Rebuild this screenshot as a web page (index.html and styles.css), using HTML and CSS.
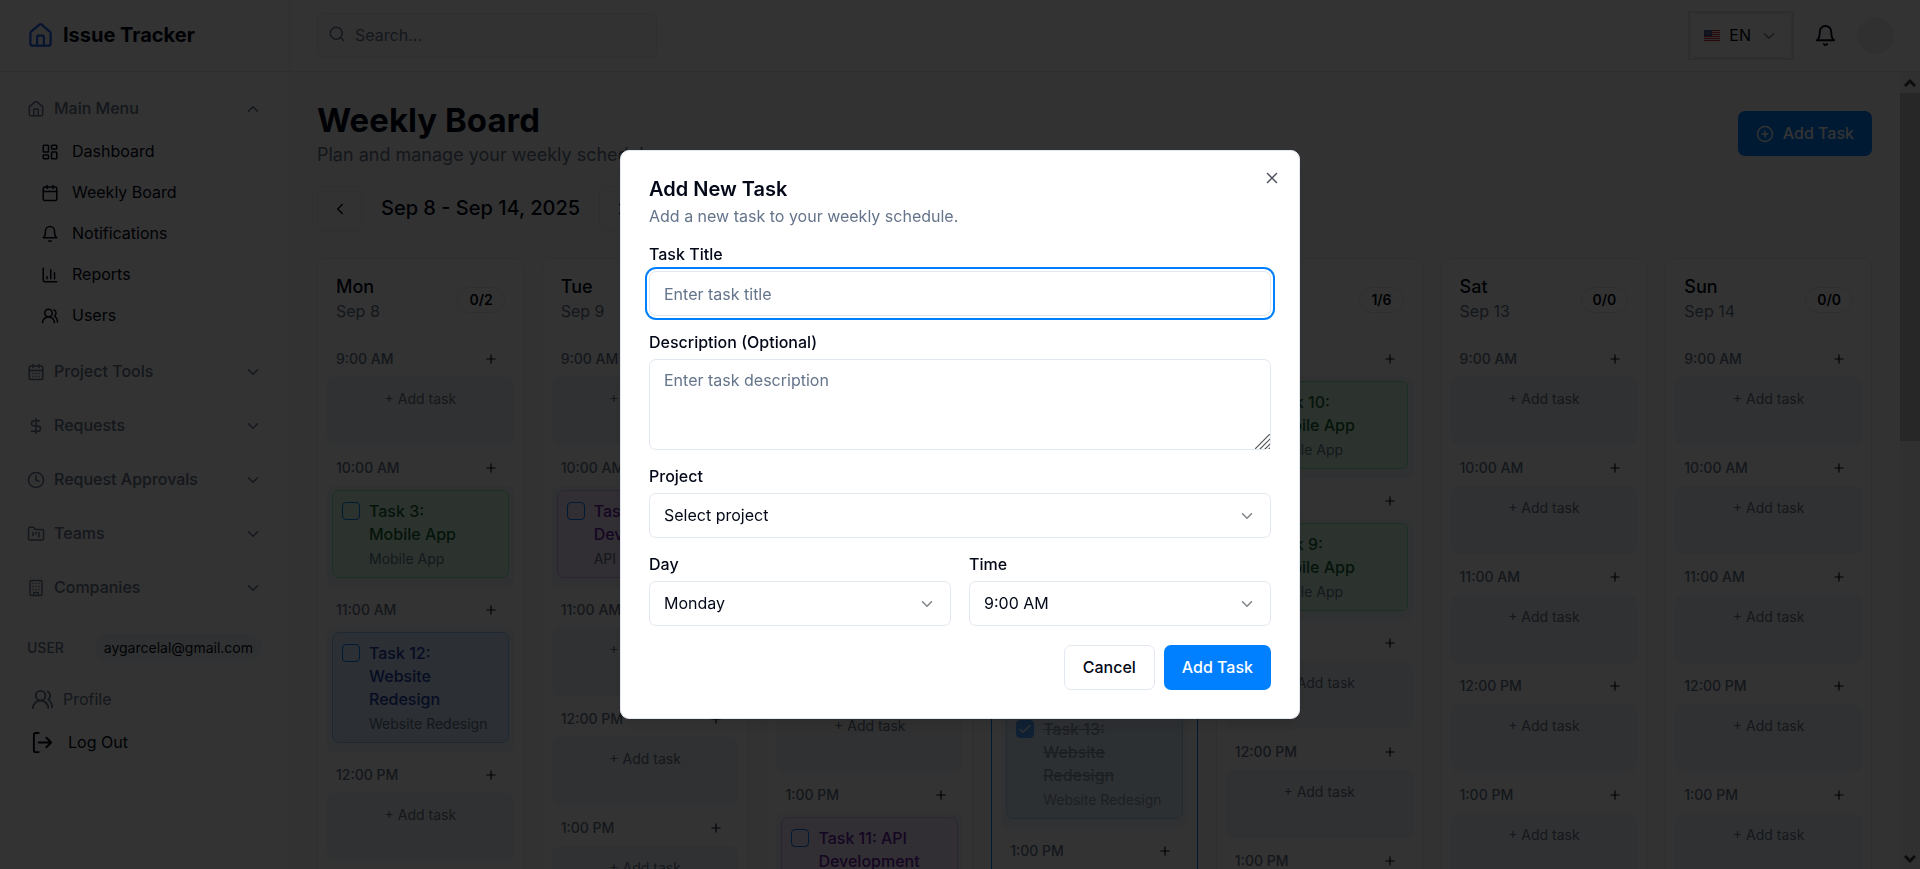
FILE: index.html
```html
<!DOCTYPE html>
<html lang="en">
<head>
<meta charset="utf-8">
<title>Issue Tracker</title>
<link rel="stylesheet" href="styles.css">
</head>
<body>
<svg class="sprite" aria-hidden="true">
  <symbol id="house" viewBox="0 0 24 24"><path d="M3 10a2 2 0 0 1 .7-1.5l7-6a2 2 0 0 1 2.6 0l7 6A2 2 0 0 1 21 10v9a2 2 0 0 1-2 2H5a2 2 0 0 1-2-2z"/><path d="M15 21v-8a1 1 0 0 0-1-1h-4a1 1 0 0 0-1 1v8"/></symbol>
  <symbol id="up" viewBox="0 0 24 24"><path d="m18 15-6-6-6 6"/></symbol>
  <symbol id="down" viewBox="0 0 24 24"><path d="m6 9 6 6 6-6"/></symbol>
  <symbol id="left" viewBox="0 0 24 24"><path d="m15 18-6-6 6-6"/></symbol>
  <symbol id="right" viewBox="0 0 24 24"><path d="m9 18 6-6-6-6"/></symbol>
  <symbol id="dash" viewBox="0 0 24 24"><rect width="7" height="9" x="3" y="3" rx="1"/><rect width="7" height="5" x="14" y="3" rx="1"/><rect width="7" height="9" x="14" y="12" rx="1"/><rect width="7" height="5" x="3" y="16" rx="1"/></symbol>
  <symbol id="cal" viewBox="0 0 24 24"><path d="M8 2v4M16 2v4M3 10h18"/><rect width="18" height="18" x="3" y="4" rx="2"/></symbol>
  <symbol id="caldays" viewBox="0 0 24 24"><path d="M8 2v4M16 2v4M3 10h18M8 14h.01M12 14h.01M16 14h.01M8 18h.01M12 18h.01M16 18h.01"/><rect width="18" height="18" x="3" y="4" rx="2"/></symbol>
  <symbol id="bell" viewBox="0 0 24 24"><path d="M6 8a6 6 0 0 1 12 0c0 7 3 9 3 9H3s3-2 3-9"/><path d="M10.3 21a1.94 1.94 0 0 0 3.4 0"/></symbol>
  <symbol id="chart" viewBox="0 0 24 24"><path d="M3 3v16a2 2 0 0 0 2 2h16M18 17V9M13 17V5M8 17v-3"/></symbol>
  <symbol id="users" viewBox="0 0 24 24"><path d="M18 21a8 8 0 0 0-16 0"/><circle cx="10" cy="8" r="5"/><path d="M22 20c0-3.37-2-6.5-4-8a5 5 0 0 0-.45-8.3"/></symbol>
  <symbol id="dollar" viewBox="0 0 24 24"><path d="M12 2v20M17 5H9.500a3.500 3.500 0 0 0 0 7h5a3.500 3.500 0 0 1 0 7H6"/></symbol>
  <symbol id="clock" viewBox="0 0 24 24"><circle cx="12" cy="12" r="10"/><path d="M12 6v6l4 2"/></symbol>
  <symbol id="folder" viewBox="0 0 24 24"><path d="M4 20h16a2 2 0 0 0 2-2V8a2 2 0 0 0-2-2h-7.930a2 2 0 0 1-1.660-.9l-.82-1.200A2 2 0 0 0 7.930 3H4a2 2 0 0 0-2 2v13c0 1.100.9 2 2 2Z"/><path d="M8 10v4M12 10v2M16 10v6"/></symbol>
  <symbol id="building" viewBox="0 0 24 24"><rect width="16" height="20" x="4" y="2" rx="2"/><path d="M9 22v-4h6v4M8 6h.01M16 6h.01M12 6h.01M12 10h.01M12 14h.01M16 10h.01M16 14h.01M8 10h.01M8 14h.01"/></symbol>
  <symbol id="logout" viewBox="0 0 24 24"><path d="M8 2H5a2 2 0 0 0-2 2v16a2 2 0 0 0 2 2h3M16 17l5-5-5-5M21 12H8"/></symbol>
  <symbol id="search" viewBox="0 0 24 24"><circle cx="11" cy="11" r="8"/><path d="m21 21-4.300-4.300"/></symbol>
  <symbol id="pluscircle" viewBox="0 0 24 24"><circle cx="12" cy="12" r="10"/><path d="M8 12h8M12 8v8"/></symbol>
  <symbol id="plus" viewBox="0 0 24 24"><path d="M5 12h14M12 5v14"/></symbol>
  <symbol id="x" viewBox="0 0 24 24"><path d="M18 6 6 18M6 6l12 12"/></symbol>
</svg>

<div class="app">
  <aside class="sidebar">
    <div class="brand"><svg class="icon icon-logo"><use href="#house"/></svg><span>Issue Tracker</span></div>
    <nav class="menu">
      <section>
        <button class="group"><svg class="icon"><use href="#house"/></svg><span>Main Menu</span><svg class="icon"><use href="#up"/></svg></button>
        <div class="links">
          <a href="#dashboard"><svg class="icon"><use href="#dash"/></svg>Dashboard</a>
          <a href="#weekly"><svg class="icon"><use href="#cal"/></svg>Weekly Board</a>
          <a href="#notifications"><svg class="icon"><use href="#bell"/></svg>Notifications</a>
          <a href="#reports"><svg class="icon"><use href="#chart"/></svg>Reports</a>
          <a href="#users-page"><svg class="icon"><use href="#users"/></svg>Users</a>
        </div>
      </section>
      <button class="group"><svg class="icon"><use href="#caldays"/></svg><span>Project Tools</span><svg class="icon"><use href="#down"/></svg></button>
      <button class="group"><svg class="icon"><use href="#dollar"/></svg><span>Requests</span><svg class="icon"><use href="#down"/></svg></button>
      <button class="group"><svg class="icon"><use href="#clock"/></svg><span>Request Approvals</span><svg class="icon"><use href="#down"/></svg></button>
      <button class="group"><svg class="icon"><use href="#folder"/></svg><span>Teams</span><svg class="icon"><use href="#down"/></svg></button>
      <button class="group"><svg class="icon"><use href="#building"/></svg><span>Companies</span><svg class="icon"><use href="#down"/></svg></button>
    </nav>
    <div class="user"><span>USER</span><span class="email">aygarcelal@gmail.com</span></div>
    <div class="account">
      <a class="profile" href="#profile"><svg class="icon icon-lg"><use href="#users"/></svg>Profile</a>
      <a class="logout" href="#logout"><svg class="icon icon-lg"><use href="#logout"/></svg>Log Out</a>
    </div>
  </aside>

  <div class="page">
    <header class="topbar">
      <label class="search"><svg class="icon"><use href="#search"/></svg><input type="search" placeholder="Search..." aria-label="Search"></label>
      <div class="tools">
        <div class="lang-ring"><button class="lang">
          <svg class="flag" viewBox="0 0 16 12"><path fill="#eee" d="M0 0h16v12H0z"/><path stroke="#d22f3d" stroke-width="1" d="M0 .5h16M0 2.500h16M0 4.500h16M0 6.500h16M0 8.500h16M0 10.500h16"/><path fill="#3c4a8c" d="M0 0h8v6H0z"/><path stroke="#fff" stroke-width=".6" stroke-dasharray=".6 1" d="M.7 1h7M1.500 2.300h6M.7 3.600h7M1.500 4.900h6"/></svg>
          EN<svg class="icon chev"><use href="#down"/></svg></button></div>
        <button class="bell" aria-label="Notifications"><svg class="icon icon-lg"><use href="#bell"/></svg></button>
        <div class="avatar"></div>
      </div>
    </header>
    <div class="viewport">
      <main class="content">
        <div class="heading">
          <div><h1>Weekly Board</h1><p>Plan and manage your weekly schedule</p></div>
          <button class="btn primary"><svg class="icon"><use href="#pluscircle"/></svg>Add Task</button>
        </div>
        <div class="week">
          <button class="square" aria-label="Previous week"><svg class="icon"><use href="#left"/></svg></button>
          <h2>Sep 8 - Sep 14, 2025</h2>
          <button class="square" aria-label="Next week"><svg class="icon"><use href="#right"/></svg></button>
        </div>
        <div class="board" id="board"></div>
      </main>
      <div class="scrollbar" aria-hidden="true">
        <svg class="arrow" viewBox="0 0 20 21"><path d="m5 14 5-5 5 5"/></svg>
        <div class="thumb"></div>
        <svg class="arrow" viewBox="0 0 20 21"><path d="m5 8 5 5 5-5"/></svg>
      </div>
    </div>
  </div>
</div>

<div class="overlay">
  <form class="dialog" role="dialog" aria-labelledby="dialog-title">
    <button class="close" type="button" aria-label="Close"><svg class="icon"><use href="#x"/></svg></button>
    <header><h2 id="dialog-title">Add New Task</h2><p>Add a new task to your weekly schedule.</p></header>
    <div class="field"><label for="title">Task Title</label><input class="control focused" id="title" placeholder="Enter task title"></div>
    <div class="field"><label for="desc">Description (Optional)</label><textarea class="control" id="desc" placeholder="Enter task description"></textarea></div>
    <div class="field"><label for="project">Project</label><div class="select"><select class="control" id="project"><option>Select project</option></select><svg class="icon"><use href="#down"/></svg></div></div>
    <div class="pair">
      <div class="field"><label for="day">Day</label><div class="select"><select class="control" id="day"><option>Monday</option></select><svg class="icon"><use href="#down"/></svg></div></div>
      <div class="field"><label for="time">Time</label><div class="select"><select class="control" id="time"><option>9:00 AM</option></select><svg class="icon"><use href="#down"/></svg></div></div>
    </div>
    <div class="actions"><button class="btn outline" type="button">Cancel</button><button class="btn primary" type="button">Add Task</button></div>
  </form>
</div>
<script src="board.js"></script>
</body>
</html>
```

FILE: styles.css
```css
*, *::before, *::after { box-sizing: border-box; }
:root { --fg: #020817; --muted: #64748b; --line: #e2e8f0; --blue: #0080ff; --soft: #f1f5f9; }
body { margin: 0; font: 16px/23px Inter, sans-serif; color: var(--fg); background: #fafafa; overflow: hidden; }
h1, h2, h3, p { margin: 0; }
button, input, textarea, select { font: inherit; color: inherit; margin: 0; }
button { background: none; border: 0; padding: 0; }
a { color: inherit; text-decoration: none; }
.sprite { position: absolute; width: 0; height: 0; }
.icon { width: 18px; height: 18px; flex: none; fill: none; stroke: currentColor; stroke-width: 2; stroke-linecap: round; stroke-linejoin: round; }
.icon-lg { width: 23px; height: 23px; }

.app { display: flex; height: 100vh; overflow: hidden; }
.sidebar { width: 290px; flex: none; background: #fff; border-right: 1px solid var(--line); }
.brand { display: flex; align-items: center; gap: 9px; height: 72px; padding-left: 27px; border-bottom: 1px solid var(--line); font-size: 20px; font-weight: 700; }
.icon-logo { width: 27px; height: 27px; color: #2563eb; }
.menu { display: grid; gap: 9px; padding: 14px 27px 0; }
.group { display: flex; align-items: center; gap: 9px; width: 100%; height: 45px; color: var(--muted); font-weight: 500; text-align: left; }
.group span { flex: 1; }
.links { display: grid; padding: 0 0 4px 14px; }
.links a { display: flex; align-items: center; gap: 13px; height: 41px; }
.user { display: flex; align-items: center; justify-content: space-between; padding: 24px 27px 0; font-size: 14px; font-weight: 500; color: var(--muted); }
.email { padding: 2px 9px; border-radius: 14px; background: var(--soft); color: var(--fg); font-weight: 400; }
.account { padding: 17px 31px; }
.account a { display: flex; align-items: center; height: 43px; gap: 9px; }
.account .profile { color: var(--muted); }
.account .logout { gap: 14px; }

.page { flex: 1; min-width: 0; display: flex; flex-direction: column; }
.topbar { display: flex; align-items: center; justify-content: space-between; height: 72px; flex: none; padding: 0 26px 0 27px; background: #fff; border-bottom: 1px solid var(--line); }
.search { display: flex; align-items: center; gap: 9px; width: 340px; height: 45px; padding: 0 10px; border: 1px solid var(--line); border-radius: 7px; background: #fafafa; color: var(--muted); }
.search .icon { margin-bottom: 4px; }
.search input { flex: 1; min-width: 0; border: 0; padding: 0; background: none; outline: 0; }
::placeholder { color: var(--muted); opacity: 1; }
.tools { display: flex; align-items: center; }
.lang-ring { border: 2px solid #e5e7eb; }
.lang { display: flex; align-items: center; height: 45px; padding: 0 13px; border: 1px solid var(--line); border-radius: 7px; }
.flag { width: 16px; height: 12px; margin-right: 9px; }
.chev { margin-left: 9px; opacity: .5; }
.bell { margin: 0 20px; display: flex; }
.avatar { width: 37px; height: 37px; border-radius: 50%; background: #f0f0f0; }

.viewport { flex: 1; min-height: 0; display: flex; overflow: hidden; }
.content { flex: 1; min-width: 0; padding: 27px 28px 27px 27px; }
.scrollbar { width: 20px; flex: none; display: flex; flex-direction: column; background: #f1f1f1; }
.arrow { height: 21px; flex: none; fill: none; stroke: #404040; stroke-width: 3; }
.thumb { height: 348px; background: #c1c1c1; }
.scrollbar .arrow:last-child { margin-top: auto; }
.heading { display: flex; align-items: center; justify-content: space-between; }
h1 { font-size: 33px; line-height: 42px; font-weight: 700; }
.heading p { font-size: 18px; line-height: 27px; color: var(--muted); }
.btn { display: inline-flex; align-items: center; justify-content: center; gap: 9px; height: 45px; padding: 0 18px; border-radius: 7px; font-weight: 500; }
.primary { background: var(--blue); color: #fff; }
.outline { border: 1px solid var(--line); background: #fff; }
.week { display: flex; align-items: center; gap: 19px; padding: 18px 0 27px; }
.week h2 { font-size: 20px; font-weight: 500; }
.square { display: grid; place-items: center; width: 45px; height: 45px; border: 1px solid var(--line); border-radius: 7px; }

.board { display: grid; grid-template-columns: repeat(7, minmax(0, 1fr)); gap: 18px; align-items: start; }
.day { border: 1px solid var(--line); border-radius: 9px; background: #fff; padding: 0 9px 18px; }
.day.today { border-color: var(--blue); }
.day-head { display: flex; align-items: center; justify-content: space-between; padding: 18px 9px 23px; }
.day-head h3 { font-size: 18px; line-height: 20px; font-weight: 500; }
.day-head p { margin-top: 3px; line-height: 22px; color: var(--muted); }
.badge { padding: 1px 11px; border: 1px solid var(--line); border-radius: 13px; font-size: 14px; line-height: 22px; font-weight: 600; }
.slot { margin-bottom: 9px; }
.slot-head { display: flex; align-items: center; justify-content: space-between; height: 27px; margin-bottom: 5px; padding: 0 9px; font-size: 14px; font-weight: 500; color: var(--muted); }
.slot-head button { display: grid; place-items: center; width: 27px; height: 27px; color: var(--fg); }
.slot-head .icon { width: 14px; height: 14px; }
.drop { min-height: 68px; border-radius: 7px; background: var(--soft); }
.add { display: block; width: 100%; padding-top: 13px; font-size: 14px; line-height: 18px; text-align: center; color: var(--muted); }
.drop.filled { padding: 4px 5px 9px; }
.card { display: flex; align-items: flex-start; gap: 9px; padding: 9px; border: 1px solid; border-radius: 7px; }
.card input { appearance: none; flex: none; width: 18px; height: 18px; margin: 2px 0 0; border: 1px solid var(--blue); border-radius: 4px; }
.card div { flex: 1; min-width: 0; }
.card h4 { margin: 0; padding-right: 22px; font-size: 16px; line-height: 23px; font-weight: 500; }
.card p { margin-top: 4px; font-size: 14px; line-height: 18px; color: var(--muted); }
.green { background: #dcfce7; border-color: #86efac; color: #166534; }
.blue { background: #dbeafe; border-color: #93c5fd; color: #1e40af; }
.purple { background: #f3e8ff; border-color: #d8b4fe; color: #6b21a8; }
.done { opacity: .7; color: var(--muted); }
.done h4 { text-decoration: line-through; }
.card input:checked { background: var(--blue) url("data:image/svg+xml,%3Csvg xmlns='http://www.w3.org/2000/svg' viewBox='0 0 24 24' fill='none' stroke='white' stroke-width='2'%3E%3Cpath d='M20 6 9 17l-5-5'/%3E%3C/svg%3E") center / 16px no-repeat; }

.overlay { position: fixed; inset: 0; display: grid; place-items: center; background: rgba(0, 0, 0, .8); }
.dialog { position: relative; width: 680px; max-width: 100%; padding: 27px 28px 28px; display: grid; gap: 18px; border: 1px solid var(--line); border-radius: 9px; background: #fff; box-shadow: 0 10px 15px -3px rgba(0, 0, 0, .1); }
.close { position: absolute; top: 18px; right: 18px; display: flex; opacity: .7; }
.dialog h2 { font-size: 20px; line-height: 22px; font-weight: 600; }
.dialog header p { margin-top: 5px; color: var(--muted); }
.field { display: grid; gap: 8px; }
.field label { line-height: 17px; font-weight: 500; }
.control { display: block; width: 100%; height: 45px; padding: 0 14px; border: 1px solid var(--line); border-radius: 7px; background: #fff; outline: 0; }
textarea.control { height: 91px; padding: 9px 14px; resize: vertical; }
textarea::-webkit-scrollbar { width: 19px; height: 19px; }
textarea::-webkit-resizer { background: url("data:image/svg+xml,%3Csvg xmlns='http://www.w3.org/2000/svg' viewBox='0 0 19 19' stroke='%23555' stroke-width='1.200'%3E%3Cpath d='M1 18 18 1M6 18 18 6M11 18l7-7M15 18l3-3'/%3E%3C/svg%3E") center / 19px no-repeat; }
.focused { box-shadow: 0 0 0 2px #fff, 0 0 0 4px var(--blue); }
.select { display: grid; align-items: center; }
.select > * { grid-area: 1 / 1; }
.select select { appearance: none; }
.select .icon { justify-self: end; margin-right: 15px; opacity: .5; pointer-events: none; }
.pair { display: grid; grid-template-columns: 1fr 1fr; gap: 18px; }
.actions { display: flex; justify-content: flex-end; gap: 9px; padding-top: 1px; }
```

FILE: board.js
```js
const hours = ["9:00 AM", "10:00 AM", "11:00 AM", "12:00 PM", "1:00 PM"];
const mobile = (n) => ({ title: `Task ${n}: Mobile App`, project: "Mobile App", tone: "green" });
const site = (n, done) => ({ title: `Task ${n}: Website Redesign`, project: "Website Redesign", tone: "blue", done });
const api = (n) => ({ title: `Task ${n}: API Development`, project: "API Development", tone: "purple" });
const days = [
  { name: "Mon", date: "Sep 8", count: "0/2", tasks: { 1: mobile(3), 2: site(12) } },
  { name: "Tue", date: "Sep 9", count: "0/1", tasks: { 1: api(5) } },
  { name: "Wed", date: "Sep 10", count: "0/2", tasks: { 4: api(11) } },
  { name: "Thu", date: "Sep 11", count: "1/1", today: true, tasks: { 3: site(13, true) } },
  { name: "Fri", date: "Sep 12", count: "1/6", tasks: { 0: mobile(10), 1: mobile(9) } },
  { name: "Sat", date: "Sep 13", count: "0/0", tasks: {} },
  { name: "Sun", date: "Sep 14", count: "0/0", tasks: {} },
];

const card = (t) => `<div class="drop filled"><div class="card ${t.tone} ${t.done ? "done" : ""}">
  <input type="checkbox" aria-label="${t.title}" ${t.done ? "checked" : ""}>
  <div><h4>${t.title}</h4><p>${t.project}</p></div></div></div>`;
const empty = `<div class="drop"><button class="add">+ Add task</button></div>`;

document.getElementById("board").innerHTML = days.map((d) => `
  <section class="day ${d.today ? "today" : ""}">
    <div class="day-head"><div><h3>${d.name}</h3><p>${d.date}</p></div><span class="badge">${d.count}</span></div>
    ${hours.map((h, i) => `<div class="slot">
      <div class="slot-head"><span>${h}</span><button aria-label="Add at ${h}"><svg class="icon"><use href="#plus"/></svg></button></div>
      ${d.tasks[i] ? card(d.tasks[i]) : empty}</div>`).join("")}
  </section>`).join("");
```
